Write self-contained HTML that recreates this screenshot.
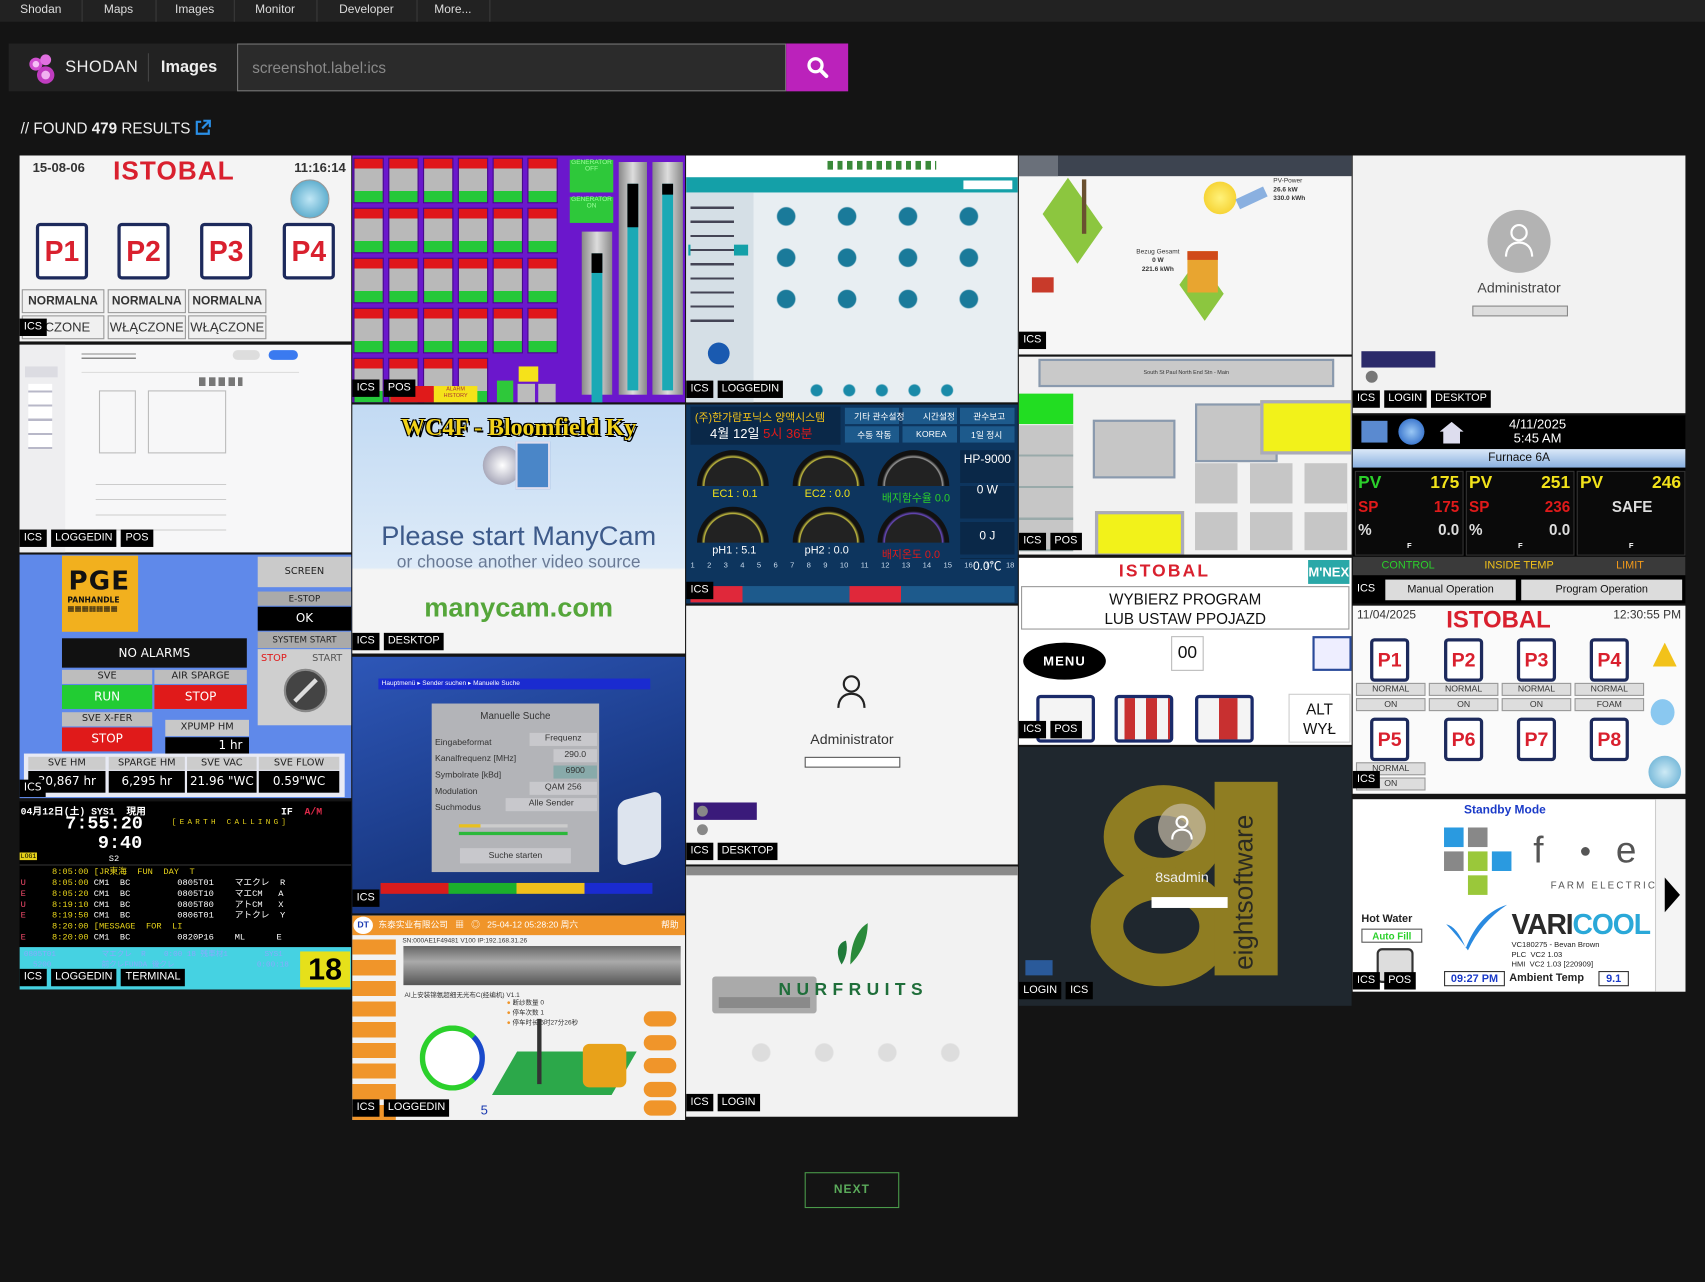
<!DOCTYPE html>
<html><head><meta charset="utf-8">
<style>
html,body{margin:0;padding:0;background:#141414;width:1705px;height:1282px;overflow:hidden}
#w{position:relative;width:1568px;height:1179px;transform:scale(1.08737);transform-origin:0 0;font-family:"Liberation Sans","Noto Sans CJK SC",sans-serif;color:#fff}
.a{position:absolute}
.t{position:absolute;overflow:hidden;width:305px}
.tags{position:absolute;left:0;display:flex;gap:4px}
.tags span{background:#000;color:#fff;font-size:10px;line-height:10px;padding:3px 4px}
.nav{position:absolute;left:0;top:0;width:1568px;height:20px;background:#222}
.nav span{position:absolute;top:0;height:20px;line-height:19px;font-size:11px;color:#ddd;text-align:center;border-right:1px solid #3a3a3a}
.c{display:block;width:28px;height:42px;background:linear-gradient(#e0161a 0 22%,#b9b9b9 22% 74%,#25c83a 74%);border:1px solid #4a0a8a;box-sizing:border-box}
.pb{position:absolute;border:3px solid #1d2a5c;border-radius:4px;background:#fff;color:#d9202e;font-weight:bold;text-align:center;box-sizing:border-box}
.gb{position:absolute;background:#ddd;border:1px solid #999;color:#333;text-align:center;box-sizing:border-box}
.ctr{text-align:center}
</style></head><body><div id="w">

<div class="nav">
<span style="left:0;width:75px">Shodan</span><span style="left:75px;width:68px">Maps</span><span style="left:143px;width:72px">Images</span><span style="left:215px;width:76px">Monitor</span><span style="left:291px;width:92px">Developer</span><span style="left:383px;width:67px">More...</span>
</div>

<div class="a" style="left:8px;top:40px;width:210px;height:44px;background:#222"></div>
<svg class="a" style="left:24px;top:48px" width="32" height="32" viewBox="0 0 32 32"><circle cx="9" cy="11" r="6" fill="#d04fd0"/><circle cx="18" cy="7" r="5" fill="#e070e0"/><circle cx="18" cy="21" r="8" fill="#c03cc0"/><circle cx="18" cy="21" r="4" fill="#f0b0f0"/><circle cx="9" cy="11" r="3" fill="#f5c0f5"/></svg>
<div class="a" style="left:60px;top:53px;font-size:15px;color:#eee;letter-spacing:0.5px">SHODAN</div>
<div class="a" style="left:136px;top:49px;width:1px;height:26px;background:#444"></div>
<div class="a" style="left:148px;top:53px;font-size:15px;font-weight:bold;color:#eee">Images</div>
<div class="a" style="left:218px;top:40px;width:505px;height:44px;background:#2b2b2b;border:1px solid #777;box-sizing:border-box"></div>
<div class="a" style="left:232px;top:54px;font-size:14px;color:#8a8a8a">screenshot.label:ics</div>
<div class="a" style="left:723px;top:40px;width:57px;height:44px;background:#bb22bb"></div>
<svg class="a" style="left:741px;top:51px" width="22" height="22" viewBox="0 0 22 22"><circle cx="9" cy="9" r="6" stroke="#fff" stroke-width="3" fill="none"/><path d="M13.5 13.5L19 19" stroke="#fff" stroke-width="3.5" stroke-linecap="round"/></svg>
<div class="a" style="left:19px;top:110px;font-size:14px;color:#eee">// FOUND <b>479</b> RESULTS</div>
<svg class="a" style="left:179px;top:110px" width="15" height="15" viewBox="0 0 15 15"><path d="M6 2H2v11h11V9" stroke="#2a8fe6" stroke-width="2" fill="none"/><path d="M8 1h6v6M14 1L7 8" stroke="#2a8fe6" stroke-width="2" fill="none"/></svg>

<!-- COL 1 -->
<div class="t" style="left:18px;top:143px;height:171px;background:#f4f4f4;color:#333">
<div class="a" style="left:12px;top:4px;font-size:12px;font-weight:bold;color:#333">15-08-06</div>
<div class="a" style="left:86px;top:1px;font-size:24px;font-weight:bold;color:#d9202e;letter-spacing:1px">ISTOBAL</div>
<div class="a" style="right:5px;top:4px;font-size:12px;font-weight:bold;color:#333">11:16:14</div>
<div class="a" style="left:249px;top:22px;width:34px;height:34px;border-radius:50%;background:radial-gradient(#bfe6f5,#3d9ac0);border:1px solid #999"></div>
<div class="pb" style="left:15px;top:62px;width:48px;height:52px;font-size:26px;line-height:46px">P1</div>
<div class="pb" style="left:90px;top:62px;width:48px;height:52px;font-size:26px;line-height:46px">P2</div>
<div class="pb" style="left:166px;top:62px;width:48px;height:52px;font-size:26px;line-height:46px">P3</div>
<div class="pb" style="left:242px;top:62px;width:48px;height:52px;font-size:26px;line-height:46px">P4</div>
<div class="gb" style="left:2px;top:123px;width:76px;height:22px;font-size:11px;line-height:20px;background:#f0f0f0;font-weight:bold">NORMALNA</div>
<div class="gb" style="left:81px;top:123px;width:72px;height:22px;font-size:11px;line-height:20px;background:#f0f0f0;font-weight:bold">NORMALNA</div>
<div class="gb" style="left:155px;top:123px;width:72px;height:22px;font-size:11px;line-height:20px;background:#f0f0f0;font-weight:bold">NORMALNA</div>
<div class="gb" style="left:2px;top:147px;width:76px;height:22px;font-size:12px;line-height:20px;background:#f0f0f0">ĄCZONE</div>
<div class="gb" style="left:81px;top:147px;width:72px;height:22px;font-size:12px;line-height:20px;background:#f0f0f0">WŁĄCZONE</div>
<div class="gb" style="left:155px;top:147px;width:72px;height:22px;font-size:12px;line-height:20px;background:#f0f0f0">WŁĄCZONE</div>
<div class="tags" style="top:150px"><span>ICS</span></div>
</div>

<div class="t" style="left:18px;top:317px;height:191px;background:#f7f7f8">
<div class="a" style="left:0;top:0;width:42px;height:191px;background:#eeeef0"></div>
<div class="a" style="left:5px;top:20px;width:30px;height:10px;background:#dcdce2"></div>
<div class="a" style="left:8px;top:36px;width:22px;height:60px;background:repeating-linear-gradient(#fff 0 6px,#b8b8c8 6px 8px,#fff 8px 13px)"></div>
<div class="a" style="left:57px;top:5px;width:50px;height:10px;background:repeating-linear-gradient(#f7f7f8 0 3px,#888 3px 4px)"></div>
<div class="a" style="left:196px;top:5px;width:25px;height:9px;border-radius:5px;background:#ddd"></div>
<div class="a" style="left:229px;top:5px;width:27px;height:9px;border-radius:5px;background:#3a7af0"></div>
<div class="a" style="left:57px;top:25px;width:200px;height:1px;background:#ddd"></div>
<div class="a" style="left:73px;top:42px;width:32px;height:56px;border:1px solid #bbb"></div>
<div class="a" style="left:118px;top:42px;width:70px;height:56px;border:1px solid #bbb"></div>
<div class="a" style="left:165px;top:30px;width:40px;height:8px;background:repeating-linear-gradient(90deg,#777 0 6px,#f7f7f8 6px 9px)"></div>
<div class="a" style="left:70px;top:115px;width:120px;height:60px;background:repeating-linear-gradient(#f7f7f8 0 13px,#ccc 13px 14px)"></div>
<div class="tags" style="top:170px"><span>ICS</span><span>LOGGEDIN</span><span>POS</span></div>
</div>

<div class="t" style="left:18px;top:510px;height:224px;background:#5f89ea;font-family:'DejaVu Sans','Liberation Sans',sans-serif">
<div class="a" style="left:39px;top:1px;width:70px;height:70px;background:#f2b01e;color:#111"><div style="font-size:24px;font-weight:bold;padding:9px 0 0 6px;letter-spacing:1px">PGE</div><div style="font-size:7px;padding-left:5px;font-weight:bold">PANHANDLE<br>▦▦▦▦▦▦▦</div></div>
<div class="a ctr" style="left:39px;top:77px;width:170px;height:27px;background:#111;font-size:11px;line-height:27px">NO ALARMS</div>
<div class="a ctr" style="left:39px;top:106px;width:83px;height:13px;background:#bdbdbd;color:#222;font-size:9px;line-height:13px">SVE</div>
<div class="a ctr" style="left:39px;top:120px;width:83px;height:22px;background:#22cc33;font-size:11px;line-height:22px">RUN</div>
<div class="a ctr" style="left:124px;top:106px;width:85px;height:13px;background:#bdbdbd;color:#222;font-size:9px;line-height:13px">AIR SPARGE</div>
<div class="a ctr" style="left:124px;top:120px;width:85px;height:22px;background:#e01a1a;font-size:11px;line-height:22px">STOP</div>
<div class="a ctr" style="left:39px;top:145px;width:83px;height:13px;background:#bdbdbd;color:#222;font-size:9px;line-height:13px">SVE X-FER</div>
<div class="a ctr" style="left:39px;top:159px;width:83px;height:22px;background:#e01a1a;font-size:11px;line-height:22px">STOP</div>
<div class="a ctr" style="left:134px;top:152px;width:77px;height:15px;background:#c8c8c8;color:#222;font-size:9px;line-height:15px">XPUMP HM</div>
<div class="a" style="left:134px;top:168px;width:77px;height:16px;background:#000;font-size:11px;line-height:16px;text-align:right;padding-right:6px;box-sizing:border-box">1 hr</div>
<div class="a ctr" style="left:219px;top:2px;width:86px;height:28px;background:#cacaca;color:#222;font-size:9px;line-height:28px">SCREEN</div>
<div class="a ctr" style="left:219px;top:34px;width:86px;height:13px;background:#aaa;color:#222;font-size:8px;line-height:13px">E-STOP</div>
<div class="a ctr" style="left:219px;top:48px;width:86px;height:22px;background:#000;font-size:11px;line-height:22px">OK</div>
<div class="a ctr" style="left:219px;top:71px;width:86px;height:15px;background:#aaa;color:#222;font-size:8px;line-height:15px">SYSTEM START</div>
<div class="a" style="left:219px;top:87px;width:86px;height:70px;background:#cfcfcf"><span class="a" style="left:3px;top:4px;font-size:9px;color:#e01a1a">STOP</span><span class="a" style="left:50px;top:4px;font-size:9px;color:#555">START</span><div class="a" style="left:24px;top:18px;width:40px;height:40px;border-radius:50%;background:#444;border:2px solid #888;box-sizing:border-box"></div><div class="a" style="left:30px;top:36px;width:28px;height:4px;background:#ddd;transform:rotate(-45deg)"></div></div>
<div class="a" style="left:4px;top:183px;width:295px;height:40px;background:#e8eaf4"></div>
<div class="a ctr" style="left:8px;top:186px;width:71px;height:12px;background:#ccc;color:#222;font-size:9px;line-height:12px">SVE HM</div>
<div class="a ctr" style="left:82px;top:186px;width:70px;height:12px;background:#ccc;color:#222;font-size:9px;line-height:12px">SPARGE HM</div>
<div class="a ctr" style="left:154px;top:186px;width:64px;height:12px;background:#ccc;color:#222;font-size:9px;line-height:12px">SVE VAC</div>
<div class="a ctr" style="left:220px;top:186px;width:74px;height:12px;background:#ccc;color:#222;font-size:9px;line-height:12px">SVE FLOW</div>
<div class="a ctr" style="left:8px;top:199px;width:71px;height:20px;background:#000;font-size:11px;line-height:20px">30,867 hr</div>
<div class="a ctr" style="left:82px;top:199px;width:70px;height:20px;background:#000;font-size:11px;line-height:20px">6,295 hr</div>
<div class="a ctr" style="left:154px;top:199px;width:64px;height:20px;background:#000;font-size:11px;line-height:20px">21.96 "WC</div>
<div class="a ctr" style="left:220px;top:199px;width:74px;height:20px;background:#000;font-size:11px;line-height:20px">0.59"WC</div>
<div class="tags" style="top:207px"><span>ICS</span></div>
</div>

<div class="t" style="left:18px;top:737px;height:173px;background:#000;font-family:'Liberation Mono','Noto Sans CJK JP',monospace">
<div class="a" style="left:1px;top:2px;font-size:9px;font-weight:bold;white-space:pre">04月12日(土) SYS1  現用                       IF  <span style="color:#e02a4a">A/M</span></div>
<div class="a" style="left:42px;top:13px;font-size:17px;font-weight:bold;line-height:18px">7:55:20</div>
<div class="a" style="left:140px;top:16px;font-size:7px;color:#e6d21a;letter-spacing:3px">[EARTH CALLING]</div>
<div class="a" style="left:72px;top:31px;font-size:17px;font-weight:bold;line-height:18px">9:40</div>
<div class="a" style="left:82px;top:49px;font-size:8px">S2</div>
<div class="a" style="left:0;top:47px;font-size:6px;background:#e6d21a;color:#000;padding:0 1px">LOG1</div>
<div class="a" style="left:0;top:58px;width:305px;height:1px;background:#333"></div>
<div class="a" style="left:1px;top:61px;font-size:8px;line-height:10px;white-space:pre;color:#e6d21a">      8:05:00 [JR東海  FUN  DAY  T
<span style="color:#f04a6a">U</span>     8:05:00 <span style="color:#fff">CM1  BC         0805T01    マエクレ  R</span>
<span style="color:#f04a6a">E</span>     8:05:20 <span style="color:#fff">CM1  BC         0805T10    マエCM   A</span>
<span style="color:#f04a6a">U</span>     8:19:10 <span style="color:#fff">CM1  BC         0805T80    アトCM   X</span>
<span style="color:#f04a6a">E</span>     8:19:50 <span style="color:#fff">CM1  BC         0806T01    アトクレ  Y</span>
      8:20:00 [MESSAGE  FOR  LI
<span style="color:#f04a6a">E</span>     8:20:00 <span style="color:#fff">CM1  BC         0820P16    ML      E</span></div>
<div class="a" style="left:0;top:134px;width:305px;height:39px;background:#45d2e2"></div>
<div class="a" style="left:4px;top:135px;font-size:7px;color:#8af;white-space:pre">0805T01          マエクレ  R    0:00 18 残車材1        SYS1
  5200           前クレFUNDA 後クレ                  0:00:18</div>
<div class="a ctr" style="left:258px;top:138px;width:46px;height:33px;background:#e6e01a;color:#000;font-size:28px;font-weight:bold;line-height:33px;font-family:'Liberation Sans',sans-serif">18</div>
<div class="tags" style="top:154px;font-family:'Liberation Sans',sans-serif"><span>ICS</span><span>LOGGEDIN</span><span>TERMINAL</span></div>
</div>

<!-- COL 2 -->
<div class="t" style="left:324px;top:143px;width:306px;height:227px;background:#6b17cc">
<div class="a" style="left:1px;top:2px;display:grid;grid-template-columns:repeat(6,28px);column-gap:4px;row-gap:4px">
<i class="c"></i><i class="c"></i><i class="c"></i><i class="c"></i><i class="c"></i><i class="c"></i>
<i class="c"></i><i class="c"></i><i class="c"></i><i class="c"></i><i class="c"></i><i class="c"></i>
<i class="c"></i><i class="c"></i><i class="c"></i><i class="c"></i><i class="c"></i><i class="c"></i>
<i class="c"></i><i class="c"></i><i class="c"></i><i class="c"></i><i class="c"></i><i class="c"></i>
<i class="c"></i><i class="c"></i><i class="c"></i><i class="c"></i>
</div>
<div class="a ctr" style="left:200px;top:4px;width:40px;height:30px;background:#2ec83a;color:#9f9;font-size:6px">GENERATOR OFF</div>
<div class="a ctr" style="left:200px;top:38px;width:40px;height:24px;background:#2ec83a;color:#9f9;font-size:6px">GENERATOR ON</div>
<div class="a" style="left:211px;top:70px;width:28px;height:150px;background:linear-gradient(90deg,#888,#ddd,#888)"><div class="a" style="left:9px;top:20px;width:10px;height:120px;background:#1aa9b5;border-top:18px solid #000"></div></div>
<div class="a" style="left:245px;top:6px;width:26px;height:214px;background:linear-gradient(90deg,#888,#ddd,#888)"><div class="a" style="left:8px;top:20px;width:10px;height:190px;background:#1aa9b5;border-top:40px solid #000;box-sizing:border-box"></div></div>
<div class="a" style="left:276px;top:6px;width:28px;height:214px;background:linear-gradient(90deg,#888,#ddd,#888)"><div class="a" style="left:9px;top:20px;width:10px;height:190px;background:#1aa9b5;border-top:10px solid #000;box-sizing:border-box"></div></div>
<div class="a" style="left:35px;top:212px;width:40px;height:15px;background:#e01a1a"></div>
<div class="a ctr" style="left:75px;top:212px;width:40px;height:15px;background:#f5e21a;color:#a33;font-size:5px">ALARM HISTORY</div>
<div class="a" style="left:133px;top:207px;width:15px;height:20px;background:#2ec83a"></div>
<div class="a" style="left:153px;top:194px;width:18px;height:14px;background:#f5e21a"></div>
<div class="a" style="left:152px;top:210px;width:16px;height:17px;background:#bbb"></div>
<div class="a" style="left:171px;top:210px;width:16px;height:17px;background:#bbb"></div>
<div class="tags" style="top:206px"><span>ICS</span><span>POS</span></div>
</div>

<div class="t" style="left:324px;top:372px;width:306px;height:229px;background:linear-gradient(#c2daf3,#deebf8 150px,#f4f4f4 152px)">
<div class="a ctr" style="left:0;top:8px;width:306px;font-family:'Liberation Serif',serif;font-size:22px;font-weight:bold;color:#f2d21a;text-shadow:2px 2px 0 #000,-1px -1px 0 #000,1px -1px 0 #000,-1px 1px 0 #000">WC4F - Bloomfield Ky</div>
<div class="a" style="left:120px;top:38px;width:36px;height:36px;border-radius:50%;background:radial-gradient(#fff,#aab 70%,#778)"></div>
<div class="a" style="left:150px;top:34px;width:28px;height:40px;background:#4a86c8;border:2px solid #dde"></div>
<div class="a ctr" style="left:0;top:107px;width:306px;font-size:25px;color:#3d5a8a">Please start ManyCam</div>
<div class="a ctr" style="left:0;top:137px;width:306px;font-size:16px;color:#6a7a95">or choose another video source</div>
<div class="a ctr" style="left:0;top:173px;width:306px;font-size:25px;color:#55a63a;font-weight:bold">manycam.com</div>
<div class="tags" style="top:210px"><span>ICS</span><span>DESKTOP</span></div>
</div>

<div class="t" style="left:324px;top:604px;width:306px;height:236px;background:linear-gradient(160deg,#2e57b8,#1a3a86 60%,#13286a)">
<div class="a" style="left:24px;top:20px;width:250px;height:10px;background:#1a2bd0;font-size:6px;line-height:10px;padding-left:3px;box-sizing:border-box">Hauptmenü ▸ Sender suchen ▸ Manuelle Suche</div>
<div class="a" style="left:73px;top:43px;width:154px;height:155px;background:#b3b4b8;color:#333;font-size:8px">
<div class="ctr" style="padding-top:6px;font-size:9px">Manuelle Suche</div>
<div class="a" style="left:3px;top:28px;line-height:15px">Eingabeformat<br>Kanalfrequenz [MHz]<br>Symbolrate [kBd]<br>Modulation<br>Suchmodus</div>
<div class="a" style="left:90px;top:27px;width:62px;height:12px;background:#c8c8cc;text-align:center">Frequenz</div>
<div class="a" style="left:112px;top:42px;width:40px;height:12px;background:#c8c8cc;text-align:center">290.0</div>
<div class="a" style="left:112px;top:57px;width:40px;height:12px;background:#8aa;text-align:center">6900</div>
<div class="a" style="left:90px;top:72px;width:62px;height:12px;background:#c8c8cc;text-align:center">QAM 256</div>
<div class="a" style="left:68px;top:87px;width:84px;height:12px;background:#c8c8cc;text-align:center">Alle Sender</div>
<div class="a" style="left:25px;top:111px;width:100px;height:3px;background:linear-gradient(90deg,#e8c020 20%,#ccc 20%)"></div>
<div class="a" style="left:25px;top:118px;width:100px;height:3px;background:#2bb83a"></div>
<div class="a ctr" style="left:26px;top:133px;width:102px;height:14px;background:#c8c8cc;line-height:14px">Suche starten</div>
</div>
<div class="a" style="left:244px;top:128px;width:40px;height:60px;background:#dde4ee;border-radius:8px;transform:skewY(-15deg)"></div>
<div class="a" style="left:26px;top:208px;width:250px;height:10px;background:linear-gradient(90deg,#d81c1c 0 25%,#1cb02c 25% 50%,#f0c01c 50% 75%,#1a2bd0 75%)"></div>
<div class="tags" style="top:214px"><span>ICS</span></div>
</div>

<div class="t" style="left:324px;top:842px;width:306px;height:188px;background:#f2f2f2;color:#333">
<div class="a" style="left:0;top:0;width:306px;height:18px;background:#f0952a;color:#fff;font-size:8px;line-height:18px;padding-left:24px;box-sizing:border-box">东泰实业有限公司 &nbsp; ▦ &nbsp; ◎ &nbsp; 25-04-12 05:28:20 周六 <span style="float:right;padding-right:6px">帮助</span></div>
<div class="a" style="left:1px;top:1px;width:18px;height:16px;border-radius:50%;background:#fff;color:#1a3ab0;font-size:8px;font-weight:bold;line-height:16px;text-align:center">DT</div>
<div class="a" style="left:0;top:22px;width:40px;height:166px;background:repeating-linear-gradient(#f0952a 0 14px,#f2f2f2 14px 19px)"></div>
<div class="a" style="left:46px;top:21px;font-size:6px">SN:000AE1F49481 V100 IP:192.168.31.26</div>
<div class="a" style="left:47px;top:28px;width:255px;height:36px;background:linear-gradient(#666,#aaa 40%,#555)"></div>
<div class="a" style="left:48px;top:68px;font-size:6px">AI上安装锦氨超细无光布C(经编机) V1.1</div>
<div class="a" style="left:62px;top:101px;width:60px;height:60px;border-radius:50%;border:5px solid #2bd02b;border-right-color:#1a4acb;box-sizing:border-box;background:#fff"></div>
<div class="a" style="left:140px;top:125px;width:110px;height:40px;background:#2ca84a;transform:skewX(-30deg)"></div>
<div class="a" style="left:170px;top:95px;width:4px;height:60px;background:#333"></div>
<div class="a" style="left:212px;top:118px;width:40px;height:40px;background:#e8a21a;border-radius:6px"></div>
<div class="a" style="left:142px;top:77px;font-size:6px;line-height:9px"><span style="color:#f0952a">●</span> 断纱数量 0<br><span style="color:#f0952a">●</span> 停车次数 1<br><span style="color:#f0952a">●</span> 停车时长 5时27分26秒</div>
<div class="a" style="left:268px;top:88px;width:30px;height:14px;border-radius:7px;background:#f0952a"></div>
<div class="a" style="left:268px;top:110px;width:30px;height:14px;border-radius:7px;background:#f0952a"></div>
<div class="a" style="left:268px;top:131px;width:30px;height:14px;border-radius:7px;background:#f0952a"></div>
<div class="a" style="left:268px;top:153px;width:30px;height:14px;border-radius:7px;background:#f0952a"></div>
<div class="a" style="left:268px;top:170px;width:30px;height:14px;border-radius:7px;background:#f0952a"></div>
<div class="a" style="left:118px;top:172px;font-size:12px;color:#1a3ab0">5</div>
<div class="tags" style="top:169px"><span>ICS</span><span>LOGGEDIN</span></div>
</div>

<!-- COL 3 -->
<div class="t" style="left:631px;top:143px;height:227px;background:#e8eef2">
<div class="a" style="left:0;top:0;width:305px;height:20px;background:#fff"></div>
<div class="a" style="left:130px;top:5px;width:100px;height:8px;background:repeating-linear-gradient(90deg,#3a8a3a 0 5px,#fff 5px 9px)"></div>
<div class="a" style="left:0;top:20px;width:305px;height:14px;background:#14a0a8"></div>
<div class="a" style="left:255px;top:23px;width:45px;height:8px;background:#fff"></div>
<div class="a" style="left:0;top:34px;width:62px;height:193px;background:#d5dfe6"></div>
<div class="a" style="left:2px;top:82px;width:55px;height:10px;background:#14a0a8"></div>
<div class="a" style="left:4px;top:44px;width:40px;height:110px;background:repeating-linear-gradient(#d5dfe6 0 3px,#445 3px 5px,#d5dfe6 5px 13px)"></div>
<div class="a" style="left:80px;top:44px;width:200px;height:100px;background:radial-gradient(circle at 12px 12px,#1a7a9a 8px,transparent 9px) 0 0/56px 38px"></div>
<div class="a" style="left:20px;top:172px;width:20px;height:20px;border-radius:50%;background:#1a5ab0"></div>
<div class="a" style="left:105px;top:210px;width:150px;height:12px;background:radial-gradient(circle,#1a8aa8 5px,transparent 6px) 0 0/30px 12px"></div>
<div class="tags" style="top:207px"><span>ICS</span><span>LOGGEDIN</span></div>
</div>

<div class="t" style="left:631px;top:372px;height:183px;background:#0d355e;font-family:'Liberation Sans','Noto Sans CJK KR',sans-serif">
<div class="a" style="left:4px;top:2px;width:138px;height:35px;background:#0a2848"></div>
<div class="a" style="left:8px;top:3px;font-size:10px;color:#f2c21a">(주)한가람포닉스 양액시스템</div>
<div class="a" style="left:22px;top:18px;font-size:12px;color:#fff">4월 12일 <span style="color:#e01a1a">5시 36분</span></div>
<div class="a" style="left:146px;top:3px;width:156px;height:32px;background:linear-gradient(90deg,#1d5a8c 0 32%,transparent 32% 34%,#1d5a8c 34% 66%,transparent 66% 68%,#1d5a8c 68%)"></div>
<div class="a" style="left:146px;top:18px;width:156px;height:2px;background:#0d355e"></div>
<div class="a" style="left:146px;top:6px;width:156px;font-size:8px;display:flex;justify-content:space-around">기타 관수설정<span>시간설정</span><span>관수보고</span></div>
<div class="a" style="left:146px;top:23px;width:156px;font-size:8px;display:flex;justify-content:space-around">수동 작동<span>KOREA</span><span>1일 정시</span></div>
<div class="a" style="left:10px;top:42px;width:66px;height:33px;border-radius:33px 33px 0 0;background:radial-gradient(circle at 50% 100%,#222 55%,#c8c040 57%,#111 62%)"></div>
<div class="a" style="left:98px;top:42px;width:66px;height:33px;border-radius:33px 33px 0 0;background:radial-gradient(circle at 50% 100%,#222 55%,#c8c040 57%,#111 62%)"></div>
<div class="a" style="left:176px;top:42px;width:66px;height:33px;border-radius:33px 33px 0 0;background:radial-gradient(circle at 50% 100%,#222 55%,#9a9a9a 57%,#111 62%)"></div>
<div class="a" style="left:10px;top:94px;width:66px;height:33px;border-radius:33px 33px 0 0;background:radial-gradient(circle at 50% 100%,#222 55%,#c8c040 57%,#111 62%)"></div>
<div class="a" style="left:98px;top:94px;width:66px;height:33px;border-radius:33px 33px 0 0;background:radial-gradient(circle at 50% 100%,#222 55%,#c8c040 57%,#111 62%)"></div>
<div class="a" style="left:176px;top:94px;width:66px;height:33px;border-radius:33px 33px 0 0;background:radial-gradient(circle at 50% 100%,#222 55%,#6a4ac0 57%,#111 62%)"></div>
<div class="a" style="left:24px;top:77px;font-size:10px;color:#f2e21a">EC1 : 0.1</div>
<div class="a" style="left:109px;top:77px;font-size:10px;color:#f2e21a">EC2 : 0.0</div>
<div class="a" style="left:180px;top:77px;font-size:10px;color:#2bd02b">배지함수율 0.0</div>
<div class="a" style="left:24px;top:129px;font-size:10px;color:#fff">pH1 : 5.1</div>
<div class="a" style="left:109px;top:129px;font-size:10px;color:#fff">pH2 : 0.0</div>
<div class="a" style="left:180px;top:129px;font-size:10px;color:#e01a1a">배지온도 0.0</div>
<div class="a" style="left:252px;top:42px;width:50px;height:100px;background:repeating-linear-gradient(#0a2848 0 30px,#0d355e 30px 33px);font-size:11px;text-align:center;line-height:14px;padding-top:2px;box-sizing:border-box">HP-9000<br><br>0 W<br><br><br>0 J<br><br>0.0℃</div>
<div class="a" style="left:4px;top:145px;width:298px;height:12px;font-size:7px;display:flex;justify-content:space-between;color:#cde">1<span>2</span><span>3</span><span>4</span><span>5</span><span>6</span><span>7</span><span>8</span><span>9</span><span>10</span><span>11</span><span>12</span><span>13</span><span>14</span><span>15</span><span>16</span><span>17</span><span>18</span></div>
<div class="a" style="left:4px;top:167px;width:298px;height:15px;background:linear-gradient(90deg,#e0283a 0 16%,#1d5a8c 16% 49%,#e0283a 49% 65%,#1d5a8c 65%)"></div>
<div class="tags" style="top:163px"><span>ICS</span></div>
</div>

<div class="t" style="left:631px;top:557px;height:238px;background:#f4f4f4">
<svg class="a" style="left:138px;top:63px" width="28" height="32" viewBox="0 0 28 32"><circle cx="14" cy="9" r="7" stroke="#222" stroke-width="2" fill="none"/><path d="M2 31c0-8 5-13 12-13s12 5 12 13" stroke="#222" stroke-width="2" fill="none"/></svg>
<div class="a ctr" style="left:0;top:115px;width:305px;font-size:13px;color:#333">Administrator</div>
<div class="a" style="left:109px;top:139px;width:88px;height:10px;border:1px solid #555;background:#fff;box-sizing:border-box"></div>
<div class="a" style="left:7px;top:181px;width:58px;height:16px;background:#3a1a7a"></div>
<div class="a" style="left:10px;top:184px;width:10px;height:10px;border-radius:50%;background:#888"></div>
<div class="a" style="left:10px;top:201px;width:10px;height:10px;border-radius:50%;background:#888"></div>
<div class="tags" style="top:218px"><span>ICS</span><span>DESKTOP</span></div>
</div>

<div class="t" style="left:631px;top:797px;height:230px;background:#f2f2f2">
<div class="a" style="left:0;top:0;width:305px;height:8px;background:#8a8a8a"></div>
<svg class="a" style="left:135px;top:50px" width="34" height="45" viewBox="0 0 34 45"><path d="M8 40C2 30 4 20 12 18C14 26 12 34 8 40Z" fill="#1f7a3a"/><path d="M16 40C16 22 22 8 32 2C32 18 26 30 16 40Z" fill="#2a8a3a"/></svg>
<div class="a" style="left:24px;top:101px;width:96px;height:34px;background:#aaa;border-radius:3px"></div>
<div class="a" style="left:30px;top:120px;width:84px;height:10px;background:#8a8a8a"></div>
<div class="a" style="left:85px;top:105px;font-size:16px;font-weight:bold;color:#1f6e3a;letter-spacing:5px">NURFRUITS</div>
<div class="a" style="left:40px;top:160px;width:220px;height:22px;background:radial-gradient(circle,#ddd 8px,transparent 9px) 0 0/58px 22px"></div>
<div class="tags" style="top:209px"><span>ICS</span><span>LOGIN</span></div>
</div>

<!-- COL 4 -->
<div class="t" style="left:937px;top:143px;width:306px;height:183px;background:#f6f6f6">
<div class="a" style="left:0;top:0;width:306px;height:19px;background:#3d4450"></div>
<div class="a" style="left:0;top:0;width:36px;height:19px;background:#6a707a"></div>
<div class="a" style="left:170px;top:24px;width:30px;height:30px;border-radius:50%;background:radial-gradient(#fff27a,#f3c81a)"></div>
<div class="a" style="left:200px;top:34px;width:28px;height:10px;background:#8ab0e0;transform:rotate(-25deg)"></div>
<div class="a" style="left:234px;top:20px;font-size:6px;color:#333;line-height:8px">PV-Power<br><b>26.6 kW</b><br><b>330.0 kWh</b></div>
<div class="a" style="left:22px;top:40px;width:55px;height:40px;background:#8cc63f;transform:rotate(45deg) skew(10deg,10deg)"></div>
<div class="a" style="left:58px;top:22px;width:4px;height:50px;background:#6a5030"></div>
<div class="a" style="left:148px;top:108px;width:40px;height:30px;background:#8cc63f;transform:rotate(45deg) skew(10deg,10deg)"></div>
<div class="a" style="left:155px;top:88px;width:28px;height:30px;background:#e8a530;border-top:8px solid #d04a1a"></div>
<div class="a" style="left:12px;top:112px;width:20px;height:14px;background:#c83a2a"></div>
<div class="a" style="left:108px;top:85px;font-size:6px;color:#333;line-height:8px;text-align:center">Bezug Gesamt<br><b>0 W</b><br><b>221.6 kWh</b></div>
<div class="tags" style="top:162px"><span>ICS</span></div>
</div>

<div class="t" style="left:937px;top:328px;width:306px;height:182px;background:#f2f2f2">
<div class="a ctr" style="left:18px;top:2px;width:272px;height:26px;background:#c9c9c9;border:2px solid #8a9aae;box-sizing:border-box;font-size:5px;color:#333;line-height:22px">South St Paul North End Stn - Main</div>
<div class="a" style="left:0;top:34px;width:50px;height:28px;background:#22dd22"></div>
<div class="a" style="left:0;top:63px;width:50px;height:116px;background:repeating-linear-gradient(#c6c6c6 0 27px,#9aa 27px 29px)"></div>
<div class="a" style="left:68px;top:58px;width:72px;height:50px;background:#c6c6c6;border:2px solid #8a9aae"></div>
<div class="a" style="left:162px;top:43px;width:72px;height:50px;background:#c6c6c6;border:2px solid #8a9aae"></div>
<div class="a" style="left:222px;top:40px;width:80px;height:44px;background:#f2f21a;border:3px solid #aab"></div>
<div class="a" style="left:70px;top:142px;width:76px;height:36px;background:#f2f21a;border:3px solid #aab"></div>
<div class="a" style="left:162px;top:98px;width:140px;height:80px;background:linear-gradient(90deg,#c6c6c6 0 28%,transparent 28% 36%,#c6c6c6 36% 64%,transparent 64% 72%,#c6c6c6 72%)"></div>
<div class="a" style="left:162px;top:135px;width:140px;height:8px;background:#f2f2f2"></div>
<div class="tags" style="top:162px"><span>ICS</span><span>POS</span></div>
</div>

<div class="t" style="left:937px;top:513px;width:306px;height:172px;background:#fff;color:#111">
<div class="a" style="left:92px;top:4px;font-size:16px;font-weight:bold;color:#d9202e;letter-spacing:2px">ISTOBAL</div>
<div class="a" style="left:266px;top:2px;width:38px;height:22px;background:#2aa8a8;color:#fff;font-weight:bold;font-size:12px;line-height:22px;text-align:center">M'NEX</div>
<div class="a ctr" style="left:2px;top:26px;width:302px;height:40px;border:1px solid #999;box-sizing:border-box;font-size:14px;line-height:18px;padding-top:2px">WYBIERZ PROGRAM<br>LUB USTAW PPOJAZD</div>
<div class="a ctr" style="left:4px;top:78px;width:76px;height:34px;border-radius:50%;background:#000;color:#fff;font-weight:bold;font-size:12px;line-height:34px;letter-spacing:1px">MENU</div>
<div class="a ctr" style="left:140px;top:72px;width:28px;height:30px;border:1px solid #bbb;font-size:16px;line-height:30px">00</div>
<div class="a" style="left:270px;top:72px;width:32px;height:28px;border:2px solid #2a4a9a;background:#eef"></div>
<div class="a" style="left:16px;top:126px;width:54px;height:44px;border:3px solid #1a2a6a;border-radius:4px;box-sizing:border-box;background:#f4f4f4"></div>
<div class="a" style="left:88px;top:126px;width:54px;height:44px;border:3px solid #1a2a6a;border-radius:4px;box-sizing:border-box;background:repeating-linear-gradient(90deg,#f4f4f4 0 6px,#c83030 6px 16px,#f4f4f4 16px 20px)"></div>
<div class="a" style="left:162px;top:126px;width:54px;height:44px;border:3px solid #1a2a6a;border-radius:4px;box-sizing:border-box;background:linear-gradient(90deg,#f4f4f4 40%,#c83030 40% 75%,#f4f4f4 75%)"></div>
<div class="a ctr" style="left:248px;top:125px;width:57px;height:45px;border:1px solid #ccc;font-size:14px;line-height:18px;padding-top:4px;box-sizing:border-box">ALT<br>WYŁ</div>
<div class="tags" style="top:150px"><span>ICS</span><span>POS</span></div>
</div>

<div class="t" style="left:937px;top:687px;width:306px;height:238px;background:#1f272e">
<div class="a" style="left:78px;top:35px;width:110px;height:95px;border-radius:50%;border:28px solid #8f7d22;box-sizing:border-box"></div>
<div class="a" style="left:66px;top:110px;width:130px;height:110px;border-radius:50%;border:30px solid #8f7d22;box-sizing:border-box"></div>
<div class="a" style="left:180px;top:32px;width:58px;height:178px;background:#8f7d22"></div>
<div class="a" style="left:190px;top:40px;height:165px;font-size:24px;line-height:36px;color:#2a2a22;writing-mode:vertical-rl;transform:rotate(180deg);white-space:nowrap;overflow:hidden">eightsoftware</div>
<div class="a" style="left:128px;top:52px;width:44px;height:44px;border-radius:50%;background:rgba(200,190,170,0.7)"></div>
<svg class="a" style="left:140px;top:62px" width="20" height="24" viewBox="0 0 20 24"><circle cx="10" cy="7" r="5" stroke="#fff" stroke-width="2" fill="none"/><path d="M1 23c0-6 4-9 9-9s9 3 9 9" stroke="#fff" stroke-width="2" fill="none"/></svg>
<div class="a ctr" style="left:100px;top:112px;width:100px;font-size:13px;color:#eee">8sadmin</div>
<div class="a" style="left:122px;top:138px;width:70px;height:10px;background:#fff"></div>
<div class="a" style="left:6px;top:196px;width:25px;height:14px;background:#2a5a9a"></div>
<div class="tags" style="top:216px"><span>LOGIN</span><span>ICS</span></div>
</div>

<!-- COL 5 -->
<div class="t" style="left:1244px;top:143px;width:306px;height:237px;background:#f2f2f2">
<div class="a" style="left:124px;top:50px;width:58px;height:58px;border-radius:50%;background:#b3b3b3"></div>
<svg class="a" style="left:139px;top:62px" width="28" height="32" viewBox="0 0 28 32"><circle cx="14" cy="9" r="7" stroke="#fff" stroke-width="2" fill="none"/><path d="M2 31c0-8 5-13 12-13s12 5 12 13" stroke="#fff" stroke-width="2" fill="none"/></svg>
<div class="a ctr" style="left:0;top:114px;width:306px;font-size:13px;color:#444">Administrator</div>
<div class="a" style="left:110px;top:138px;width:88px;height:10px;border:1px solid #888;background:#ddd;box-sizing:border-box"></div>
<div class="a" style="left:8px;top:180px;width:68px;height:15px;background:#2b2a6a"></div>
<div class="a" style="left:12px;top:198px;width:11px;height:11px;border-radius:50%;background:#777"></div>
<div class="tags" style="top:216px"><span>ICS</span><span>LOGIN</span><span>DESKTOP</span></div>
</div>

<div class="t" style="left:1244px;top:382px;width:306px;height:173px;background:#000">
<div class="a" style="left:8px;top:5px;width:24px;height:20px;background:#5a8ad0"></div>
<div class="a" style="left:42px;top:3px;width:24px;height:24px;border-radius:50%;background:radial-gradient(#9ac8f5,#1a5ac0)"></div>
<div class="a" style="left:80px;top:6px;width:22px;height:20px;background:#dde;clip-path:polygon(50% 0,100% 45%,85% 45%,85% 100%,15% 100%,15% 45%,0 45%)"></div>
<div class="a ctr" style="left:130px;top:2px;width:80px;font-size:12px;line-height:13px">4/11/2025<br>5:45 AM</div>
<div class="a ctr" style="left:0;top:31px;width:306px;height:17px;background:linear-gradient(#dbe8f8,#8ab0e0);color:#111;font-size:11px;line-height:17px">Furnace 6A</div>
<div class="a" style="left:2px;top:51px;width:100px;height:78px;background:#0a0a0a;border:1px solid #333;box-sizing:border-box;font-weight:bold">
<div class="a" style="left:2px;top:2px;font-size:16px;color:#2bd02b">PV</div><div class="a" style="right:3px;top:2px;font-size:16px;color:#f2e21a">175</div>
<div class="a" style="left:2px;top:24px;font-size:14px;color:#e01a1a">SP</div><div class="a" style="right:3px;top:24px;font-size:14px;color:#e01a1a">175</div>
<div class="a" style="left:2px;top:45px;font-size:14px;color:#ddd">%</div><div class="a" style="right:3px;top:45px;font-size:14px;color:#ddd">0.0</div>
<div class="a" style="left:47px;top:65px;font-size:7px">F</div></div>
<div class="a" style="left:104px;top:51px;width:100px;height:78px;background:#0a0a0a;border:1px solid #333;box-sizing:border-box;font-weight:bold">
<div class="a" style="left:2px;top:2px;font-size:16px;color:#f2e21a">PV</div><div class="a" style="right:3px;top:2px;font-size:16px;color:#f2e21a">251</div>
<div class="a" style="left:2px;top:24px;font-size:14px;color:#e01a1a">SP</div><div class="a" style="right:3px;top:24px;font-size:14px;color:#e01a1a">236</div>
<div class="a" style="left:2px;top:45px;font-size:14px;color:#ddd">%</div><div class="a" style="right:3px;top:45px;font-size:14px;color:#ddd">0.0</div>
<div class="a" style="left:47px;top:65px;font-size:7px">F</div></div>
<div class="a" style="left:206px;top:51px;width:100px;height:78px;background:#0a0a0a;border:1px solid #333;box-sizing:border-box;font-weight:bold">
<div class="a" style="left:2px;top:2px;font-size:16px;color:#f2e21a">PV</div><div class="a" style="right:3px;top:2px;font-size:16px;color:#f2e21a">246</div>
<div class="a ctr" style="left:0;top:24px;width:100px;font-size:14px;color:#ddd">SAFE</div>
<div class="a" style="left:47px;top:65px;font-size:7px">F</div></div>
<div class="a" style="left:0;top:130px;width:306px;height:17px;background:#3a3a3a;font-size:10px;line-height:17px;display:flex"><span style="width:102px;text-align:center;color:#2bd02b">CONTROL</span><span style="width:102px;text-align:center;color:#f2c21a">INSIDE TEMP</span><span style="width:102px;text-align:center;color:#f29a1a">LIMIT</span></div>
<div class="a ctr" style="left:30px;top:151px;width:120px;height:19px;background:#dcdcdc;color:#111;font-size:10px;line-height:19px">Manual Operation</div>
<div class="a ctr" style="left:155px;top:151px;width:148px;height:19px;background:#dcdcdc;color:#111;font-size:10px;line-height:19px">Program Operation</div>
<div class="tags" style="top:152px"><span>ICS</span></div>
</div>

<div class="t" style="left:1244px;top:557px;width:306px;height:173px;background:#fafafa;color:#333">
<div class="a" style="left:4px;top:3px;font-size:11px">11/04/2025</div>
<div class="a" style="left:86px;top:0px;font-size:22px;font-weight:bold;color:#d9202e">ISTOBAL</div>
<div class="a" style="right:4px;top:3px;font-size:11px">12:30:55 PM</div>
<div class="pb" style="left:16px;top:30px;width:36px;height:40px;font-size:18px;line-height:34px">P1</div>
<div class="pb" style="left:84px;top:30px;width:36px;height:40px;font-size:18px;line-height:34px">P2</div>
<div class="pb" style="left:151px;top:30px;width:36px;height:40px;font-size:18px;line-height:34px">P3</div>
<div class="pb" style="left:218px;top:30px;width:36px;height:40px;font-size:18px;line-height:34px">P4</div>
<div class="gb" style="left:3px;top:71px;width:64px;height:12px;font-size:8px;line-height:10px">NORMAL</div>
<div class="gb" style="left:70px;top:71px;width:64px;height:12px;font-size:8px;line-height:10px">NORMAL</div>
<div class="gb" style="left:137px;top:71px;width:64px;height:12px;font-size:8px;line-height:10px">NORMAL</div>
<div class="gb" style="left:204px;top:71px;width:64px;height:12px;font-size:8px;line-height:10px">NORMAL</div>
<div class="gb" style="left:3px;top:85px;width:64px;height:12px;font-size:8px;line-height:10px">ON</div>
<div class="gb" style="left:70px;top:85px;width:64px;height:12px;font-size:8px;line-height:10px">ON</div>
<div class="gb" style="left:137px;top:85px;width:64px;height:12px;font-size:8px;line-height:10px">ON</div>
<div class="gb" style="left:204px;top:85px;width:64px;height:12px;font-size:8px;line-height:10px">FOAM</div>
<div class="pb" style="left:16px;top:103px;width:36px;height:40px;font-size:18px;line-height:34px">P5</div>
<div class="pb" style="left:84px;top:103px;width:36px;height:40px;font-size:18px;line-height:34px">P6</div>
<div class="pb" style="left:151px;top:103px;width:36px;height:40px;font-size:18px;line-height:34px">P7</div>
<div class="pb" style="left:218px;top:103px;width:36px;height:40px;font-size:18px;line-height:34px">P8</div>
<div class="gb" style="left:3px;top:144px;width:64px;height:12px;font-size:8px;line-height:10px">NORMAL</div>
<div class="gb" style="left:3px;top:158px;width:64px;height:12px;font-size:8px;line-height:10px">ON</div>
<div class="a" style="left:276px;top:34px;width:22px;height:22px;background:#f2c21a;clip-path:polygon(50% 0,100% 100%,0 100%)"></div>
<div class="a" style="left:274px;top:86px;width:22px;height:24px;border-radius:50%;background:#8ac8f0"></div>
<div class="a" style="left:272px;top:138px;width:30px;height:30px;border-radius:50%;background:radial-gradient(#cdeaf5,#5aa8d0)"></div>
<div class="tags" style="top:152px"><span>ICS</span></div>
</div>

<div class="t" style="left:1244px;top:735px;width:306px;height:177px;background:#fff;color:#222">
<div class="a" style="left:278px;top:0;width:28px;height:177px;background:#f4f4f4;border-left:1px solid #ccc"></div>
<div class="a" style="left:287px;top:72px;width:0;height:0;border-top:16px solid transparent;border-bottom:16px solid transparent;border-left:14px solid #000"></div>
<div class="a ctr" style="left:50px;top:4px;width:180px;font-size:11px;font-weight:bold;color:#1a3ac8">Standby Mode</div>
<div class="a" style="left:84px;top:26px;width:18px;height:18px;background:#2a9ae0"></div>
<div class="a" style="left:106px;top:26px;width:18px;height:18px;background:#888"></div>
<div class="a" style="left:84px;top:48px;width:18px;height:18px;background:#888"></div>
<div class="a" style="left:106px;top:48px;width:18px;height:18px;background:#9ac83a"></div>
<div class="a" style="left:128px;top:48px;width:18px;height:18px;background:#2a9ae0"></div>
<div class="a" style="left:106px;top:70px;width:18px;height:18px;background:#9ac83a"></div>
<div class="a" style="left:166px;top:28px;font-size:34px;color:#555">f</div>
<div class="a" style="left:210px;top:44px;width:8px;height:8px;border-radius:50%;background:#555"></div>
<div class="a" style="left:242px;top:28px;font-size:34px;color:#555">e</div>
<div class="a" style="left:182px;top:74px;font-size:9px;color:#555;letter-spacing:2px">FARM ELECTRIC</div>
<svg class="a" style="left:84px;top:95px" width="60" height="45" viewBox="0 0 60 45"><path d="M2 20Q12 22 20 42Q32 10 58 2Q34 18 22 44Q12 30 2 20Z" fill="#2a8ae0"/></svg>
<div class="a" style="left:146px;top:100px;font-size:26px;font-weight:bold;color:#2a2a2a;letter-spacing:-1px">VARI<span style="color:#2aa8d8">COOL</span></div>
<div class="a" style="left:146px;top:130px;font-size:7px;line-height:9px">VC180275 - Bevan Brown<br>PLC &nbsp;VC2 1.03<br>HMI &nbsp;VC2 1.03 [220909]</div>
<div class="a" style="left:8px;top:105px;font-size:10px;font-weight:bold">Hot Water</div>
<div class="a ctr" style="left:8px;top:119px;width:56px;height:13px;border:1px solid #555;font-size:9px;color:#2bd02b;font-weight:bold;line-height:12px;box-sizing:border-box">Auto Fill</div>
<div class="a" style="left:22px;top:137px;width:30px;height:28px;border:2px solid #333;border-radius:5px;background:#ddd"></div>
<div class="a ctr" style="left:84px;top:158px;width:56px;height:14px;border:1px solid #333;color:#1a3ac8;font-size:10px;font-weight:bold;line-height:13px;box-sizing:border-box">09:27 PM</div>
<div class="a" style="left:144px;top:159px;font-size:10px;font-weight:bold">Ambient Temp</div>
<div class="a ctr" style="left:226px;top:158px;width:28px;height:14px;border:1px solid #333;color:#1a3ac8;font-size:10px;font-weight:bold;line-height:13px;box-sizing:border-box">9.1</div>
<div class="tags" style="top:159px"><span>ICS</span><span>POS</span></div>
</div>

<div class="a ctr" style="left:740px;top:1078px;width:87px;height:33px;border:1px solid #4a9a4a;box-sizing:border-box;color:#5aaa5a;font-size:11px;font-weight:bold;line-height:31px;letter-spacing:1px">NEXT</div>

</div></body></html>
